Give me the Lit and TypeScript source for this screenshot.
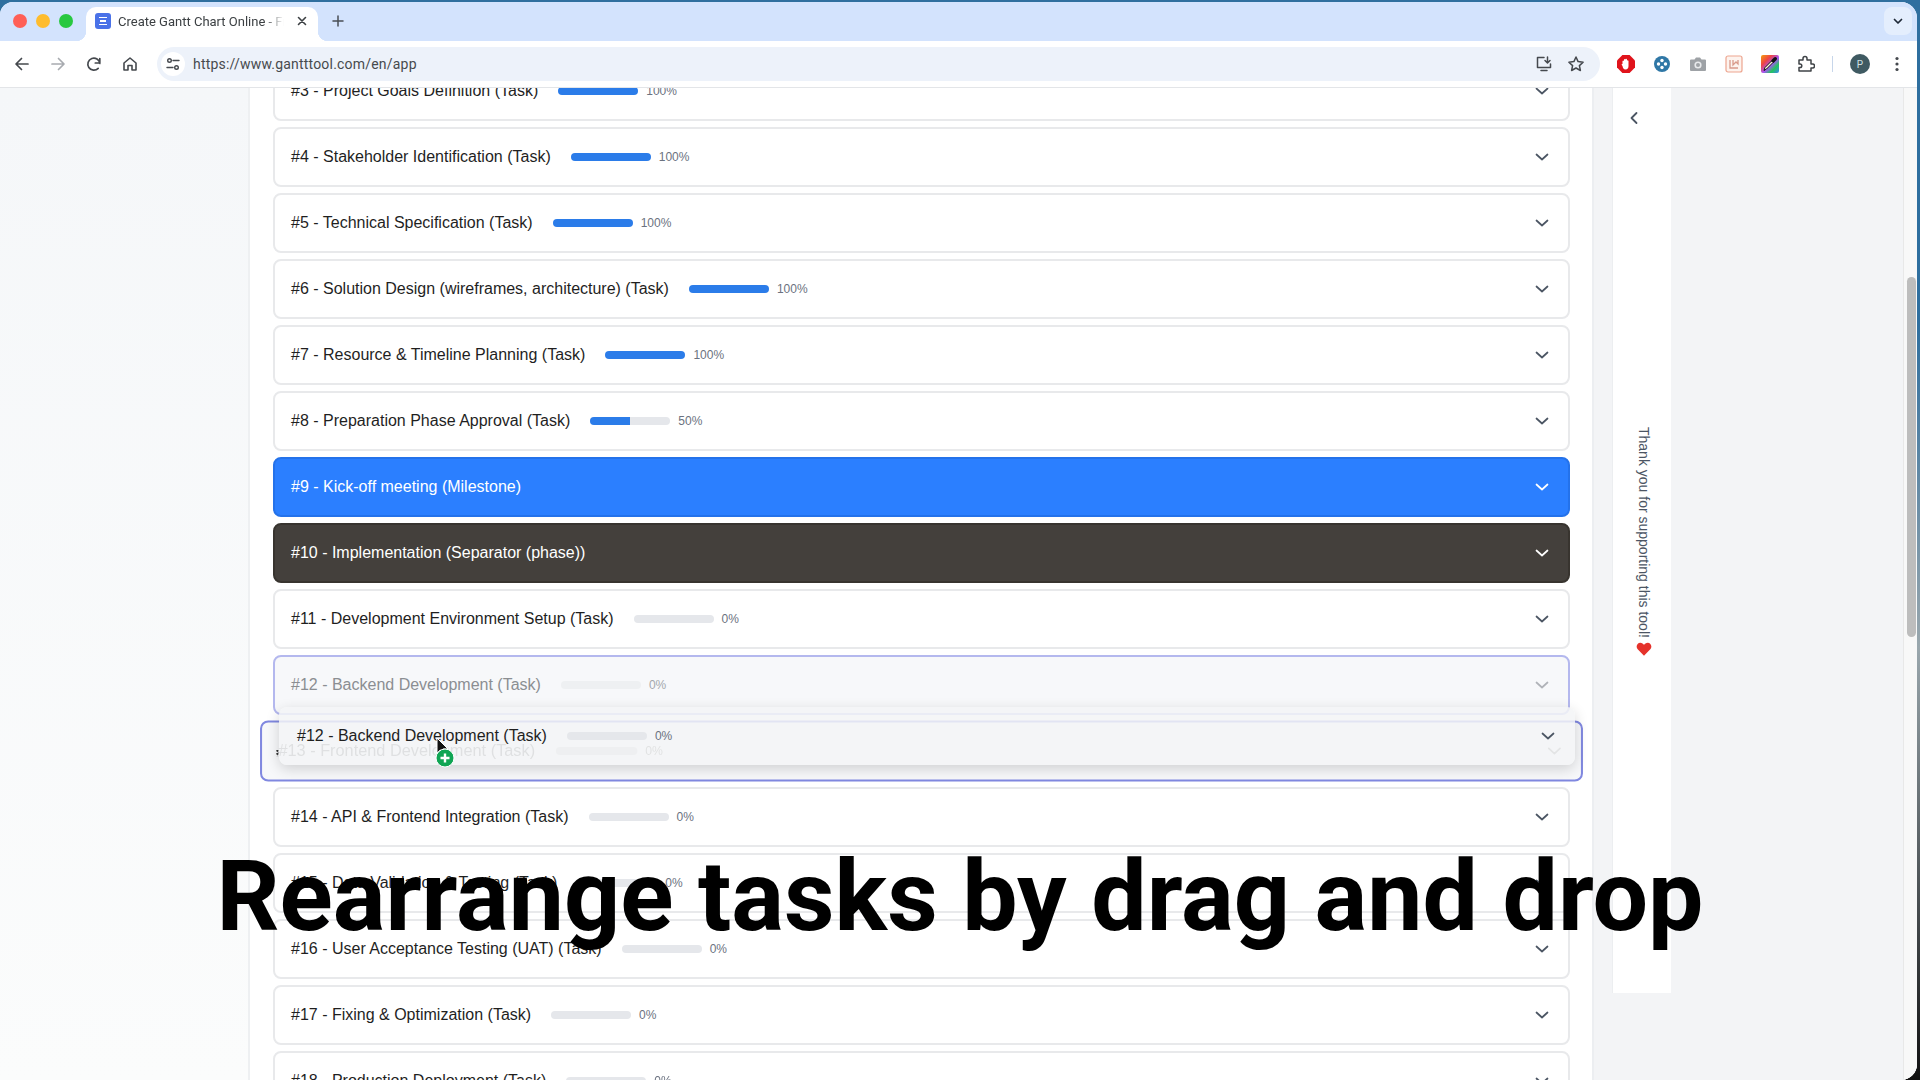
import { LitElement, html, css, svg } from "lit";
import { customElement } from "lit/decorators.js";

type Row = { n: number; name: string; kind: string; pct?: number; cls?: string };
const rows: Row[] = [
  { n: 3, name: "Project Goals Definition", kind: "Task", pct: 100 },
  { n: 4, name: "Stakeholder Identification", kind: "Task", pct: 100 },
  { n: 5, name: "Technical Specification", kind: "Task", pct: 100 },
  { n: 6, name: "Solution Design (wireframes, architecture)", kind: "Task", pct: 100 },
  { n: 7, name: "Resource & Timeline Planning", kind: "Task", pct: 100 },
  { n: 8, name: "Preparation Phase Approval", kind: "Task", pct: 50 },
  { n: 9, name: "Kick-off meeting", kind: "Milestone", cls: "milestone" },
  { n: 10, name: "Implementation", kind: "Separator (phase)", cls: "separator" },
  { n: 11, name: "Development Environment Setup", kind: "Task", pct: 0 },
  { n: 12, name: "Backend Development", kind: "Task", pct: 0, cls: "source" },
  { n: 13, name: "Frontend Development", kind: "Task", pct: 0, cls: "target" },
  { n: 14, name: "API & Frontend Integration", kind: "Task", pct: 0 },
  { n: 15, name: "Data Validation & Testing", kind: "Task", pct: 0 },
  { n: 16, name: "User Acceptance Testing (UAT)", kind: "Task", pct: 0 },
  { n: 17, name: "Fixing & Optimization", kind: "Task", pct: 0 },
  { n: 18, name: "Production Deployment", kind: "Task", pct: 0 },
];

const chevron = svg`<svg class="chev" width="16" height="16" viewBox="0 0 16 16" fill="none" stroke="currentColor" stroke-width="1.7" stroke-linecap="round" stroke-linejoin="round"><path d="M2.500 5.500 8 10.500 13.500 5.500"/></svg>`;

@customElement("app-root")
export class AppRoot extends LitElement {
  static styles = css`
    :host {
      display: block;
      width: 1920px;
      height: 1080px;
      overflow: hidden;
      position: relative;
      background: linear-gradient(180deg, #2f6f9f 0, #2f6f9f 30%, #9aa7ad 60%, #111 100%);
      font-family: "Liberation Sans", Arial, sans-serif;
    }
    * { box-sizing: border-box; }
    .window {
      width: 1917px;
      height: 1078px;
      margin-top: 2px;
      border-radius: 13px 16px 16px 0;
      overflow: hidden;
      display: flex;
      flex-direction: column;
      background: #fff;
      filter: blur(0.4px);
    }
    .tabbar {
      height: 39px;
      flex: none;
      background: #d3e3fd;
      display: flex;
      align-items: flex-start;
      padding-top: 5px;
    }
    .lights { display: flex; gap: 9px; padding: 7px 0 0 13px; width: 86px; }
    .lights i { width: 14px; height: 14px; border-radius: 50%; display: block; }
    .tab {
      width: 232px;
      height: 34px;
      background: #fff;
      border-radius: 10px 10px 0 0;
      display: flex;
      align-items: center;
      padding: 0 10px 6px 9px;
      position: relative;
    }
    .tab::before, .tab::after {
      content: "";
      position: absolute;
      bottom: 0;
      width: 10px;
      height: 10px;
    }
    .tab::before { left: -10px; background: radial-gradient(circle at 0 0, transparent 10px, #fff 10.5px); }
    .tab::after { right: -10px; background: radial-gradient(circle at 100% 0, transparent 10px, #fff 10.5px); }
    .fav {
      width: 16px; height: 16px; flex: none; border-radius: 3px; background: #4a72e8;
      display: flex; flex-direction: column; align-items: center; justify-content: center; gap: 2px;
    }
    .fav b { display: block; height: 1.5px; background: #fff; }
    .tab-title {
      flex: 1;
      margin-left: 7px;
      font: 13px Roboto, sans-serif;
      color: #3c4043;
      white-space: nowrap;
      overflow: hidden;
      -webkit-mask-image: linear-gradient(90deg, #000 88%, transparent 100%);
      mask-image: linear-gradient(90deg, #000 88%, transparent 100%);
    }
    .close { margin-left: 12px; flex: none; }
    .plus { margin: 6px 0 0 12px; flex: none; }
    .spacer { flex: 1; }
    .tablist {
      width: 28px; height: 28px; margin-right: 5px; border-radius: 8px; background: #e4eefd;
      display: flex; align-items: center; justify-content: center;
    }
    .toolbar {
      height: 47px;
      flex: none;
      background: #fff;
      border-bottom: 1px solid #e3e5e8;
      display: flex;
      align-items: center;
      padding-left: 13px;
      border-radius: 0 8px 0 0;
    }
    .nav { display: flex; gap: 18px; }
    .omni {
      margin-left: 18px;
      width: 1443px;
      height: 34px;
      border-radius: 17px;
      background: #edf2fa;
      display: flex;
      align-items: center;
      padding: 0 15px 0 4px;
    }
    .site {
      width: 24px; height: 24px; border-radius: 50%; background: #fff; flex: none;
      display: flex; align-items: center; justify-content: center;
    }
    .url { margin-left: 8px; font: 14px Roboto, sans-serif; color: #474a4d; letter-spacing: .2px; flex: 1; }
    .omni-end { display: flex; gap: 14px; align-items: center; }
    .exts { display: flex; align-items: center; margin-left: 17px; gap: 18px; }
    .divider { width: 1px; height: 16px; background: #c7d6ea; margin: 0 -1px 0 -1px; }
    .avatar {
      width: 20px; height: 20px; border-radius: 50%; background: #3f5a62; color: #cfe0e4;
      font: 10px Roboto, sans-serif; display: flex; align-items: center; justify-content: center;
    }
    .content { flex: 1; min-height: 0; display: flex; background: #f3f4f6; position: relative; overflow: hidden; }
    .gutter { width: 248px; flex: none; background: linear-gradient(180deg, #f5f7f9, #fbfcfc); }
    .main {
      width: 1346px;
      flex: none;
      background: #fff;
      border-left: 2px solid #eef0f2;
      border-right: 2px solid #eceef1;
      padding: 0 22px 0 23px;
      overflow: hidden;
    }
    .list { display: flex; flex-direction: column; gap: 6px; margin-top: -27px; }
    .row {
      height: 60px;
      flex: none;
      border: 2px solid #e8e9eb;
      border-radius: 8px;
      background: #fff;
      display: flex;
      align-items: center;
      padding: 0 18px 0 16px;
      font-size: 16px;
      color: #1f1f1f;
      white-space: nowrap;
    }
    .chev { flex: none; margin-left: auto; color: #4b5563; }
    .bar { width: 80px; height: 8px; border-radius: 4px; background: #e5e7eb; margin-left: 20px; overflow: hidden; flex: none; }
    .fill { height: 100%; background: #2b7ce9; }
    .pct { font-size: 12px; color: #6b7280; margin-left: 8px; }
    .milestone { background: #2b7fff; border-color: #2472ea; color: #fff; }
    .milestone .chev, .separator .chev { color: #fff; }
    .separator { background: #44403c; border-color: #38342f; color: #fff; }
    .source { background: #f7f8fa; border-color: #b4b8ee; color: #8b8e92; }
    .source .bar { background: #eef0f2; }
    .source .pct { color: #a4a8ad; }
    .source .chev { color: #b0b3b8; }
    .target {
      background: #f7f8fa;
      border-color: #8088e0;
      color: #6a6c70;
      transform: scale(1.02);
      position: relative;
    }
    .target .bar { background: #d0d2d6; }
    .target .pct { color: #777; }
    .target .chev { color: #888; }
    .grip {
      position: absolute; left: 14px; top: 27px; width: 2px; height: 6px;
      background: radial-gradient(circle at 1px 1px, #333 1px, transparent 1px) 0 0 / 2px 3px;
    }
    .gap { width: 18px; flex: none; }
    .side {
      width: 59px;
      height: 905px;
      flex: none;
      background: #fff;
      border-left: 1px solid #eceef0;
      display: flex;
      flex-direction: column;
      padding: 21px 0 0 12px;
    }
    .thanks {
      margin: 300px 0 0 -8px;
      writing-mode: vertical-rl;
      font-size: 14px;
      color: #4b5563;
      white-space: nowrap;
      display: flex;
      align-items: center;
      gap: 3px;
    }
    .rest { flex: 1; }
    .scroll {
      width: 14px;
      flex: none;
      background: #f8f8f8;
      border-left: 1px solid #e8e8e8;
      padding: 189px 1px 0 3px;
    }
    .thumb { height: 360px; border-radius: 5px; background: #bdbdbd; }
    .ghost {
      position: absolute;
      left: 279px;
      top: 619px;
      width: 1296px;
      height: 58px;
      background: rgba(243, 244, 246, .85);
      border-radius: 8px;
      box-shadow: 0 4px 14px rgba(0, 0, 0, .16);
      display: flex;
      align-items: center;
      padding: 0 19px 0 18px;
      font-size: 16px;
      color: #1f1f1f;
      white-space: nowrap;
    }
    .cursor { position: absolute; left: 434px; top: 648px; }
    .headline {
      position: absolute;
      left: 0;
      right: 0;
      top: 838px;
      text-align: center;
      font: 700 98.500px/118px Roboto, sans-serif;
      color: #000;
      white-space: nowrap;
      filter: blur(0.4px);
    }
  `;

  private row(r: Row) {
    const isTask = r.pct !== undefined;
    return html`<div class="row ${r.cls ?? ""}">
      ${r.cls === "target" ? html`<span class="grip"></span>` : ""}
      <span>#${r.n} - ${r.name} (${r.kind})</span>
      ${isTask
        ? html`<span class="bar"><div class="fill" style="width:${r.pct}%"></div></span><span class="pct">${r.pct}%</span>`
        : ""}
      ${chevron}
    </div>`;
  }

  render() {
    return html`
      <div class="window">
        <div class="tabbar">
          <div class="lights">
            <i style="background:#ff5f57"></i><i style="background:#febc2e"></i><i style="background:#28c840"></i>
          </div>
          <div class="tab">
            <span class="fav"><b style="width:8px"></b><b style="width:6px"></b><b style="width:8px"></b></span>
            <span class="tab-title">Create Gantt Chart Online - Free</span>
            <svg class="close" width="12" height="12" viewBox="0 0 12 12" stroke="#3c4043" stroke-width="1.6" stroke-linecap="round"><path d="M2.500 2.500l7 7M9.500 2.500l-7 7"/></svg>
          </div>
          <svg class="plus" width="16" height="16" viewBox="0 0 16 16" stroke="#4a4f55" stroke-width="1.5" stroke-linecap="round"><path d="M8 3v10M3 8h10"/></svg>
          <span class="spacer"></span>
          <div class="tablist">
            <svg width="12" height="12" viewBox="0 0 12 12" fill="none" stroke="#1f2937" stroke-width="1.7" stroke-linecap="round" stroke-linejoin="round"><path d="M2.500 4.500 6 8l3.500-3.500"/></svg>
          </div>
        </div>
        <div class="toolbar">
          <div class="nav">
            <svg width="18" height="18" viewBox="0 0 18 18" fill="none" stroke="#45494e" stroke-width="1.7" stroke-linecap="round" stroke-linejoin="round"><path d="M15 9H3.500M8.500 3.500 3 9l5.500 5.500"/></svg>
            <svg width="18" height="18" viewBox="0 0 18 18" fill="none" stroke="#a8abb0" stroke-width="1.7" stroke-linecap="round" stroke-linejoin="round"><path d="M3 9h11.500M9.500 3.500 15 9l-5.500 5.500"/></svg>
            <svg width="18" height="18" viewBox="0 0 18 18" fill="none" stroke="#45494e" stroke-width="1.7" stroke-linecap="round" stroke-linejoin="round"><path d="M14.800 8.500A6 6 0 1 0 13.200 13.300M14.800 3.500v4.500h-4.500"/></svg>
            <svg width="18" height="18" viewBox="0 0 18 18" fill="none" stroke="#45494e" stroke-width="1.6" stroke-linejoin="round"><path d="M3 8 9 3l6 5v7h-4v-4.500H7V15H3z"/></svg>
          </div>
          <div class="omni">
            <span class="site">
              <svg width="14" height="14" viewBox="0 0 14 14" fill="none" stroke="#45494e" stroke-width="1.4" stroke-linecap="round"><circle cx="3.500" cy="3.500" r="1.800"/><path d="M7 3.500h6M1 10.500h6"/><circle cx="10.500" cy="10.500" r="1.800"/></svg>
            </span>
            <span class="url">https://www.gantttool.com/en/app</span>
            <span class="omni-end">
              <svg width="18" height="18" viewBox="0 0 18 18" fill="none" stroke="#45494e" stroke-width="1.5" stroke-linecap="round" stroke-linejoin="round"><path d="M9 2.500H2.500v10h13V9M6 15.500h6M12.500 2v5.500M10 5.500l2.500 2.500L15 5.500"/></svg>
              <svg width="18" height="18" viewBox="0 0 18 18" fill="none" stroke="#45494e" stroke-width="1.5" stroke-linejoin="round"><path d="m9 2 2.100 4.600 5 .6-3.700 3.400 1 4.900L9 13l-4.400 2.500 1-4.900L1.900 7.200l5-.6z"/></svg>
            </span>
          </div>
          <div class="exts">
            <svg width="18" height="18" viewBox="0 0 18 18"><path d="M5.400 0h7.200L18 5.400v7.200L12.600 18H5.400L0 12.600V5.400z" fill="#e0141c"/><path d="M5.500 9V6a1 1 0 0 1 1.500 0V4.500a1 1 0 0 1 1.500 0V4a1 1 0 0 1 1.500.5V5.500a1 1 0 0 1 1.500.500V11c0 2-1 3.500-3 3.500S6 13 5.500 11L4.500 9.500A.8.8 0 0 1 5.500 9z" fill="#fff"/></svg>
            <svg width="18" height="18" viewBox="0 0 18 18"><circle cx="9" cy="9" r="8" fill="#2f77a6"/><circle cx="9" cy="5.500" r="1.700" fill="#fff"/><circle cx="9" cy="12.500" r="1.700" fill="#fff"/><circle cx="5.500" cy="9" r="1.700" fill="#fff"/><circle cx="12.500" cy="9" r="1.700" fill="#fff"/></svg>
            <svg width="18" height="18" viewBox="0 0 18 18"><path d="M2 4.500h3.500L7 2.500h4l1.500 2H16a1 1 0 0 1 1 1V15a1 1 0 0 1-1 1H2a1 1 0 0 1-1-1V5.500a1 1 0 0 1 1-1z" fill="#9ea2a6"/><circle cx="9" cy="10" r="3.600" fill="#e8eaec"/><circle cx="9" cy="10" r="2" fill="#9ea2a6"/></svg>
            <svg width="18" height="18" viewBox="0 0 18 18" fill="none"><rect x="1" y="1" width="16" height="16" rx="2" fill="#fdf3ee" stroke="#eda58f" stroke-width="1.200"/><path d="M5 5v8h8M8 5v5l3-3 2 2V5" stroke="#d99a8a" stroke-width="1.300"/></svg>
            <svg width="18" height="18" viewBox="0 0 18 18"><defs><linearGradient id="rb" x1="0" y1="0" x2="1" y2="1"><stop offset="0" stop-color="#f59e0b"/><stop offset=".3" stop-color="#ef4444"/><stop offset=".55" stop-color="#a855f7"/><stop offset=".75" stop-color="#22c55e"/><stop offset="1" stop-color="#3b82f6"/></linearGradient></defs><rect width="18" height="18" rx="2" fill="url(#rb)"/><path d="M3 15.500l1-3L10.500 6l1.500 1.500L5.500 14z" fill="#fdf6d8" stroke="#111" stroke-width="1"/><path d="M10 5.500 13 2.500a1.500 1.500 0 0 1 2.500 2.500l-3 3z" fill="#111"/></svg>
            <svg width="18" height="18" viewBox="0 0 18 18" fill="none" stroke="#3f4347" stroke-width="1.500" stroke-linejoin="round"><path d="M2 5h4V3.500a2 2 0 0 1 4 0V5h4v4h1.500a2 2 0 0 1 0 4H14v3H2v-3.500h1a1.800 1.800 0 0 0 0-3.600H2z"/></svg>
            <span class="divider"></span>
            <span class="avatar">P</span>
            <svg width="18" height="18" viewBox="0 0 18 18" fill="#45494e"><circle cx="9" cy="3.500" r="1.600"/><circle cx="9" cy="9" r="1.600"/><circle cx="9" cy="14.500" r="1.600"/></svg>
          </div>
        </div>
        <div class="content">
          <div class="gutter"></div>
          <div class="main">
            <div class="list">${rows.map((r) => this.row(r))}</div>
          </div>
          <div class="gap"></div>
          <div class="side">
            <svg width="18" height="18" viewBox="0 0 18 18" fill="none" stroke="#4b5563" stroke-width="1.800" stroke-linecap="round" stroke-linejoin="round"><path d="M11.500 4 6.500 9l5 5"/></svg>
            <div class="thanks">
              <span>Thank you for supporting this tool!</span>
              <svg width="16" height="16" viewBox="0 0 14 14"><path d="M7 13 1.500 7.300C-.500 5 .900 1.500 3.800 1.500c1.400 0 2.500.8 3.200 2 .7-1.200 1.800-2 3.200-2 2.900 0 4.300 3.500 2.300 5.800z" fill="#e5322b"/></svg>
            </div>
          </div>
          <div class="rest"></div>
          <div class="scroll"><div class="thumb"></div></div>
          <div class="ghost">
            <span>#12 - Backend Development (Task)</span>
            <span class="bar"></span><span class="pct">0%</span>
            ${chevron}
          </div>
          <svg class="cursor" width="30" height="38" viewBox="0 0 30 38">
            <path d="M3 2v15l3.500-3 2.500 5.500 2.500-1.200-2.500-5.300h5z" fill="#111" stroke="#fff" stroke-width="1"/>
            <circle cx="11" cy="22" r="9" fill="#10a554" stroke="#fff" stroke-width="1"/>
            <path d="M11 17.500v9M6.500 22h9" stroke="#fff" stroke-width="2.400"/>
          </svg>
        </div>
      </div>
      <div class="headline">Rearrange tasks by drag and drop</div>
    `;
  }
}
